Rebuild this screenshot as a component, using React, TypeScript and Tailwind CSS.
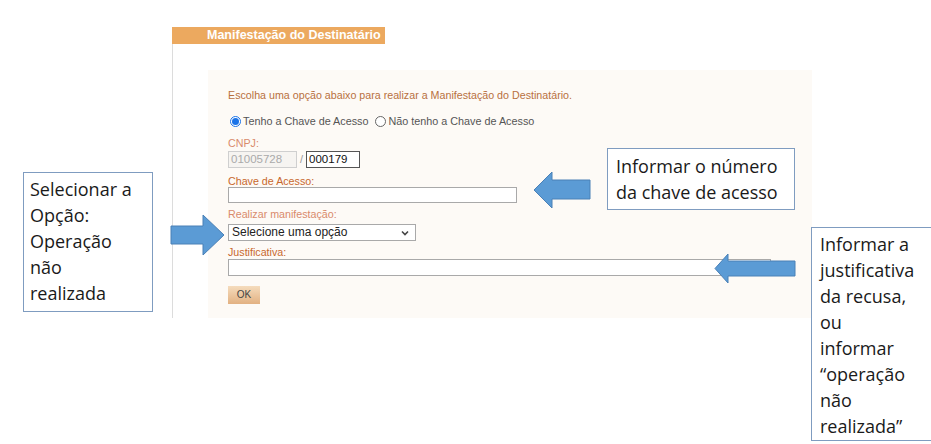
import React from "react";

const formFont = { fontFamily: '"Liberation Sans", Arial, sans-serif' };
const calloutFont = { fontFamily: '"Open Sans", "Noto Sans", sans-serif' };

function ArrowLeft({ w, h, shaftTop, shaftBottom, headLen }: { w: number; h: number; shaftTop: number; shaftBottom: number; headLen: number }) {
  const mid = h / 2;
  return (
    <svg width={w} height={h} viewBox={`0 0 ${w} ${h}`}>
      <polygon
        points={`1,${mid} ${headLen},1 ${headLen},${shaftTop} ${w - 1},${shaftTop} ${w - 1},${shaftBottom} ${headLen},${shaftBottom} ${headLen},${h - 1}`}
        fill="#5b9bd5"
        stroke="#4a80b6"
        strokeWidth="1"
      />
    </svg>
  );
}

function ArrowRight({ w, h, shaftTop, shaftBottom, headLen }: { w: number; h: number; shaftTop: number; shaftBottom: number; headLen: number }) {
  const mid = h / 2;
  const b = w - headLen;
  return (
    <svg width={w} height={h} viewBox={`0 0 ${w} ${h}`}>
      <polygon
        points={`${w - 1},${mid} ${b},1 ${b},${shaftTop} 1,${shaftTop} 1,${shaftBottom} ${b},${shaftBottom} ${b},${h - 1}`}
        fill="#5b9bd5"
        stroke="#4a80b6"
        strokeWidth="1"
      />
    </svg>
  );
}

export default function App() {
  return (
    <div className="relative w-[931px] h-[444px] bg-white overflow-hidden">
      {/* Form */}
      <div className="ml-[172px] pt-[27px] w-[640px]" style={formFont}>
        <div className="h-[17px] w-[213px] bg-[#eca95f] pl-[35px] text-[12.5px] leading-[17px] font-bold text-white whitespace-nowrap">
          Manifestação do Destinatário
        </div>
        <div className="border-l border-[#dcdcdc] pl-[35px] pt-[26px] h-[274px]">
          <div className="bg-[#fdfaf6] w-[604px] h-[248px] pl-[20px] pt-[19px]">
            <div className="text-[10.7px] leading-[12px] text-[#b8703e] whitespace-nowrap">
              Escolha uma opção abaixo para realizar a Manifestação do Destinatário.
            </div>
            <div className="mt-[13px] flex items-center h-[14px] text-[10.8px] text-[#555] pl-[2px] whitespace-nowrap">
              <span className="w-[11px] h-[11px] rounded-full border border-[#1a73e8] flex items-center justify-center bg-white">
                <span className="w-[7px] h-[7px] rounded-full bg-[#1a73e8]" />
              </span>
              <span className="ml-[2px]">Tenho a Chave de Acesso</span>
              <span className="ml-[7px] w-[11px] h-[11px] rounded-full border border-[#666] bg-white" />
              <span className="ml-[2px]">Não tenho a Chave de Acesso</span>
            </div>
            <div className="mt-[9px] text-[10.7px] leading-[12px] text-[#d98a6c]">CNPJ:</div>
            <div className="mt-[2px] flex items-center h-[17px]">
              <div className="w-[69px] h-[17px] border border-[#cfcfcf] bg-[#f6f4f1] text-[11.5px] leading-[15px] text-[#aaa] pl-[2px]">
                01005728
              </div>
              <span className="ml-[3px] text-[11px] text-[#999]">/</span>
              <div className="ml-[3px] w-[54px] h-[17px] border border-[#555] bg-white text-[11.5px] leading-[15px] text-[#111] pl-[2px]">
                000179
              </div>
            </div>
            <div className="mt-[7px] text-[10.7px] leading-[12px] text-[#c8682e]">Chave de Acesso:</div>
            <div className="w-[289px] h-[16px] border border-[#a9a9a9] bg-white" />
            <div className="mt-[5px] text-[10.7px] leading-[12px] text-[#d98a6c]">Realizar manifestação:</div>
            <div className="mt-[4px] w-[188px] h-[17px] border border-[#a9a9a9] bg-white flex items-center justify-between pl-[3px] pr-[6px]">
              <span className="text-[12px] leading-[15px] text-[#222]">Selecione uma opção</span>
              <svg width="8" height="6" viewBox="0 0 8 6">
                <path d="M1 1.5 L4 4.5 L7 1.5" fill="none" stroke="#444" strokeWidth="1.6" />
              </svg>
            </div>
            <div className="mt-[5px] text-[10.7px] leading-[12px] text-[#c8682e]">Justificativa:</div>
            <div className="mt-[1px] w-[543px] h-[17px] border border-[#a9a9a9] bg-white" />
            <div className="mt-[10px] w-[32px] h-[18px] bg-gradient-to-b from-[#f5dcbd] to-[#e2b182] text-[10px] leading-[18px] text-center text-[#444]">
              OK
            </div>
          </div>
        </div>
      </div>

      {/* Callouts */}
      <div
        className="absolute left-[23px] top-[172px] w-[130px] h-[140px] border border-[#7f9cc0] bg-white pl-[6px] pt-[3px] text-[18px] leading-[26px] text-[#1a1a1a] whitespace-nowrap"
        style={calloutFont}
      >
        Selecionar a<br />Opção:<br />Operação<br />não<br />realizada
      </div>
      <div
        className="absolute left-[607px] top-[148px] w-[188px] h-[62px] border border-[#7f9cc0] bg-white pl-[8px] pt-[4px] text-[18px] leading-[26px] text-[#1a1a1a] whitespace-nowrap"
        style={calloutFont}
      >
        Informar o número<br />da chave de acesso
      </div>
      <div
        className="absolute left-[811px] top-[227px] w-[121px] h-[214px] border border-[#7f9cc0] bg-white pl-[8px] pt-[3px] text-[18px] leading-[26px] text-[#1a1a1a] whitespace-nowrap"
        style={calloutFont}
      >
        Informar a<br />justificativa<br />da recusa,<br />ou<br />informar<br />“operação<br />não<br />realizada”
      </div>

      {/* Arrows */}
      <div className="absolute left-[533px] top-[171px]">
        <ArrowLeft w={58} h={38} shaftTop={9} shaftBottom={28} headLen={19} />
      </div>
      <div className="absolute left-[170px] top-[214px]">
        <ArrowRight w={55} h={42} shaftTop={12} shaftBottom={30} headLen={22} />
      </div>
      <div className="absolute left-[714px] top-[253px]">
        <ArrowLeft w={82} h={31} shaftTop={8} shaftBottom={23} headLen={14} />
      </div>
    </div>
  );
}
